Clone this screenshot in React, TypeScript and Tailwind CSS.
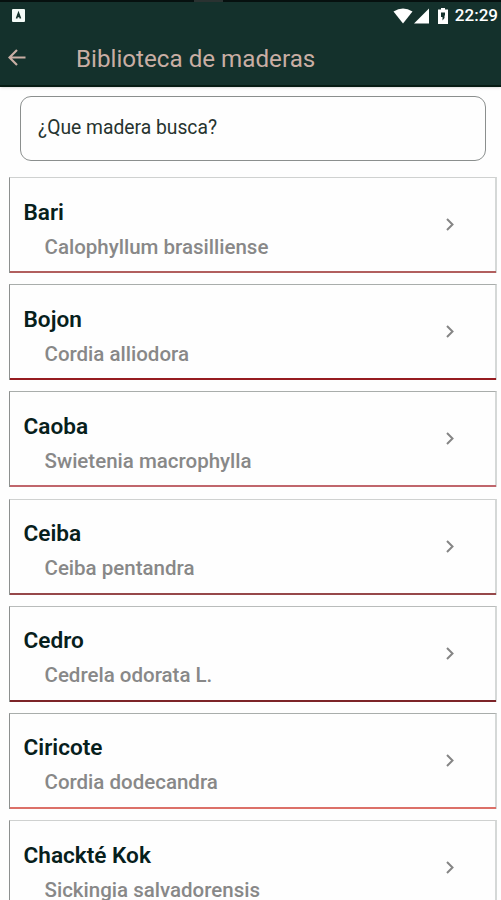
import clsx from 'clsx';

interface Wood {
    name: string;
    species: string;
    edge: string;
    line: string;
}

const woods: Wood[] = [
    { name: 'Bari', species: 'Calophyllum brasilliense', edge: 'border-t-[#cfd1d0]', line: 'bg-[#b15f5e]' },
    { name: 'Bojon', species: 'Cordia alliodora', edge: 'border-t-[#a9adab]', line: 'bg-[#961c20]' },
    { name: 'Caoba', species: 'Swietenia macrophylla', edge: 'border-t-[#a9adab]', line: 'bg-[#c0666c]' },
    { name: 'Ceiba', species: 'Ceiba pentandra', edge: 'border-t-[#cfd1d0]', line: 'bg-[#96484a]' },
    { name: 'Cedro', species: 'Cedrela odorata L.', edge: 'border-t-[#b9bcbb]', line: 'bg-[#7c2428]' },
    { name: 'Ciricote', species: 'Cordia dodecandra', edge: 'border-t-[#a9adab]', line: 'bg-[#dc7068]' },
    { name: 'Chackté Kok', species: 'Sickingia salvadorensis', edge: 'border-t-[#cfd1d0]', line: 'bg-[#b15f5e]' },
];

function StatusBar() {
    return (
        <>
            <div className="h-0.5 bg-[#06100f] pl-[194px]">
                <div className="h-full w-[29px] bg-[#2a3231]" />
            </div>
            <div className="flex h-7 items-center justify-between pr-[3px] pl-[12px] text-white">
                <svg className="-mt-px" width="13" height="13" viewBox="0 0 13 13">
                    <rect width="13" height="13" rx="1" fill="#f4fbf8" />
                    <path d="M4.5 9.5 6.5 4 8.5 9.5M5 7.5h3" fill="none" stroke="#14312c" strokeWidth="1.6" />
                </svg>
                <div className="-mt-px flex items-center">
                    <svg width="20" height="16" viewBox="0 0 20 16" fill="#fff">
                        <path d="M0.5 3.5Q10 -2.5 19.5 3.5L10 15.5Z" />
                    </svg>
                    <svg className="ml-px" width="16" height="16" viewBox="0 0 16 16" fill="#fff">
                        <path d="M0 15.5 15 0.5V15.5Z" />
                    </svg>
                    <svg className="ml-[8px]" width="10" height="16" viewBox="0 0 10 16">
                        <path d="M3 0h4v1.5h3V16H0V1.5h3Z" fill="#fff" />
                        <path d="M3 4.5H7V7.5H6.5V10L4.5 12.5V9H3Z" fill="#14312c" />
                    </svg>
                    <span className="ml-[7px] text-[17px] leading-none font-medium">22:29</span>
                </div>
            </div>
        </>
    );
}

function WoodCard({ wood }: { wood: Wood }) {
    return (
        <li
            className={clsx(
                'flex h-24 flex-col border-t border-r-2 border-l border-r-[#d5d8d7] border-l-[#8d908f]',
                wood.edge
            )}
        >
            <div className="flex flex-1 items-center justify-between pr-[41px] pl-[13.5px]">
                <div className="pt-[10px]">
                    <h2 className="text-[22.6px] leading-[34px] font-semibold text-[#07201c]">{wood.name}</h2>
                    <p className="pl-[21px] text-[20.5px] leading-[34px] font-medium text-[#888]">{wood.species}</p>
                </div>
                <svg width="8" height="13" viewBox="0 0 8 13" fill="none" stroke="#858585" strokeWidth="2">
                    <path d="M1 1 6.5 6.5 1 12" />
                </svg>
            </div>
            <div className={clsx('-mr-px h-0.5 shrink-0', wood.line)} />
        </li>
    );
}

export default function App() {
    return (
        <div className="h-[900px] overflow-hidden bg-[#fefefe] font-['Roboto',sans-serif]">
            <header className="h-[87px] border-b-2 border-[#061b13] bg-[#14312c] shadow-sm">
                <StatusBar />
                <div className="flex h-[55px] items-center pl-[8px] text-[#c9aea4]">
                    <svg width="18" height="17" viewBox="0 0 18 17" fill="none" stroke="currentColor" strokeWidth="2.2">
                        <path d="M17.5 8.5H2M9 1 1.5 8.5 9 16" />
                    </svg>
                    <h1 className="pt-[3px] pl-[50px] text-[24.2px] leading-none">Biblioteca de maderas</h1>
                </div>
            </header>
            <div className="mt-[9px] mr-[15px] ml-[20px] flex h-[65px] items-center rounded-[11px] border border-[#8b8f8e] pb-[2px] pl-[17px]">
                <span className="text-[19.3px] leading-none text-[#26332f]">¿Que madera busca?</span>
            </div>
            <ul className="mt-[16px] mr-[4px] ml-[9px] flex flex-col gap-[11.2px]">
                {woods.map((wood) => (
                    <WoodCard key={wood.name} wood={wood} />
                ))}
            </ul>
        </div>
    );
}
